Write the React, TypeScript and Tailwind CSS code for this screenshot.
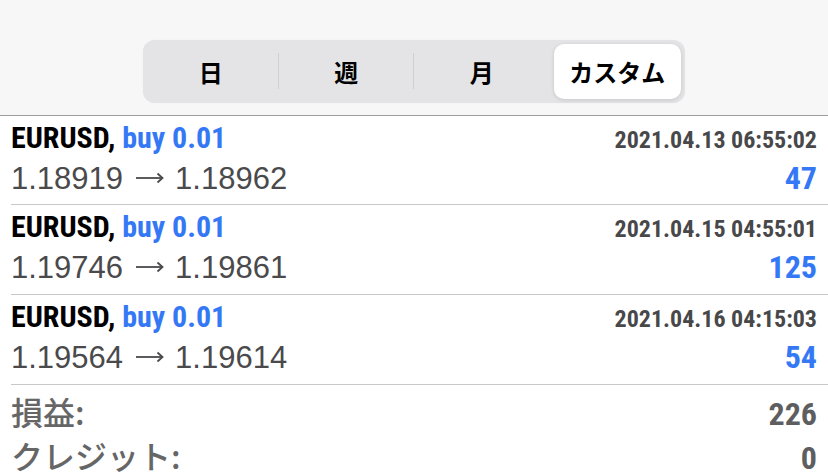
import React from "react";

const NARROW = { fontFamily: '"Liberation Sans Narrow", "Roboto Condensed", "Liberation Sans", Arial, sans-serif' };
const SANS = { fontFamily: '"Liberation Sans", Arial, sans-serif' };
const CJK = { fontFamily: '"Noto Sans CJK JP", "Noto Sans", sans-serif' };

const trades = [
  { open: "1.18919", close: "1.18962", time: "2021.04.13 06:55:02", profit: "47" },
  { open: "1.19746", close: "1.19861", time: "2021.04.15 04:55:01", profit: "125" },
  { open: "1.19564", close: "1.19614", time: "2021.04.16 04:15:03", profit: "54" },
];

function Arrow() {
  return (
    <svg width="29" height="22" viewBox="0 0 29 22" className="inline-block align-baseline ml-[12px] mr-[11px]" fill="none">
      <path d="M1 11H27.5" stroke="#4a4a4c" strokeWidth="1.8" />
      <path d="M22.5 6.5L27.5 11L22.5 15.5" stroke="#4a4a4c" strokeWidth="1.8" strokeLinejoin="miter" />
    </svg>
  );
}

function Segment({ label, selected, sep }: { label: string; selected?: boolean; sep?: boolean }) {
  return (
    <div className="relative flex-1 flex items-stretch">
      {selected ? (
        <div className="flex-1 m-[4px] bg-white rounded-[10px] shadow-[0_1px_4px_rgba(0,0,0,0.13)] flex items-center justify-center">
          <span className="text-[24px] font-bold text-black" style={CJK}>{label}</span>
        </div>
      ) : (
        <div className="flex-1 flex items-center justify-center">
          <span className="text-[24px] font-bold text-black" style={CJK}>{label}</span>
        </div>
      )}
      {sep && <div className="absolute right-0 top-[13px] bottom-[14px] w-px bg-[#cfcfd2]" />}
    </div>
  );
}

export default function App() {
  return (
    <div className="w-[828px] h-[475px] overflow-hidden bg-white">
      <div className="bg-[#f7f7f7] pt-[40px] pb-[12px] border-b border-[#9c9c9c] flex justify-center">
        <div className="w-[542px] h-[63px] bg-[#e4e4e6] rounded-[12px] flex shadow-[0_0_1px_rgba(0,0,0,0.08)]">
          <Segment label="日" sep />
          <Segment label="週" sep />
          <Segment label="月" />
          <Segment label="カスタム" selected />
        </div>
      </div>

      {trades.map((t, i) => (
        <div key={i} className="pl-[11px]">
          <div className={`pr-[11px] pt-[2px] ${i === 0 ? "pb-[6px]" : "pb-[7px]"} border-b border-[#c8c8cb]`}>
            <div className="flex justify-between items-baseline h-[40px] leading-[40px]">
              <span className="text-[30px] font-bold text-black" style={NARROW}>
                EURUSD, <span className="text-[#3478f6]">buy 0.01</span>
              </span>
              <span className="text-[24px] font-bold text-[#48484a]" style={NARROW}>{t.time}</span>
            </div>
            <div className="flex justify-between items-baseline h-[40px] leading-[40px]">
              <span className="text-[31px] text-[#4a4a4c] whitespace-nowrap" style={SANS}>
                {t.open}<Arrow />{t.close}
              </span>
              <span className="text-[32px] font-bold text-[#3478f6]" style={NARROW}>{t.profit}</span>
            </div>
          </div>
        </div>
      ))}

      <div className="px-[11px] pt-[4px]">
        <div className="flex justify-between items-baseline h-[44px] leading-[44px]">
          <span className="text-[32px] font-medium text-[#666666]" style={CJK}>損益:</span>
          <span className="text-[32px] font-bold text-[#5e5e60]" style={NARROW}>226</span>
        </div>
        <div className="flex justify-between items-baseline h-[44px] leading-[44px]">
          <span className="text-[32px] font-medium text-[#666666]" style={CJK}>クレジット:</span>
          <span className="text-[32px] font-bold text-[#5e5e60]" style={NARROW}>0</span>
        </div>
      </div>
    </div>
  );
}
